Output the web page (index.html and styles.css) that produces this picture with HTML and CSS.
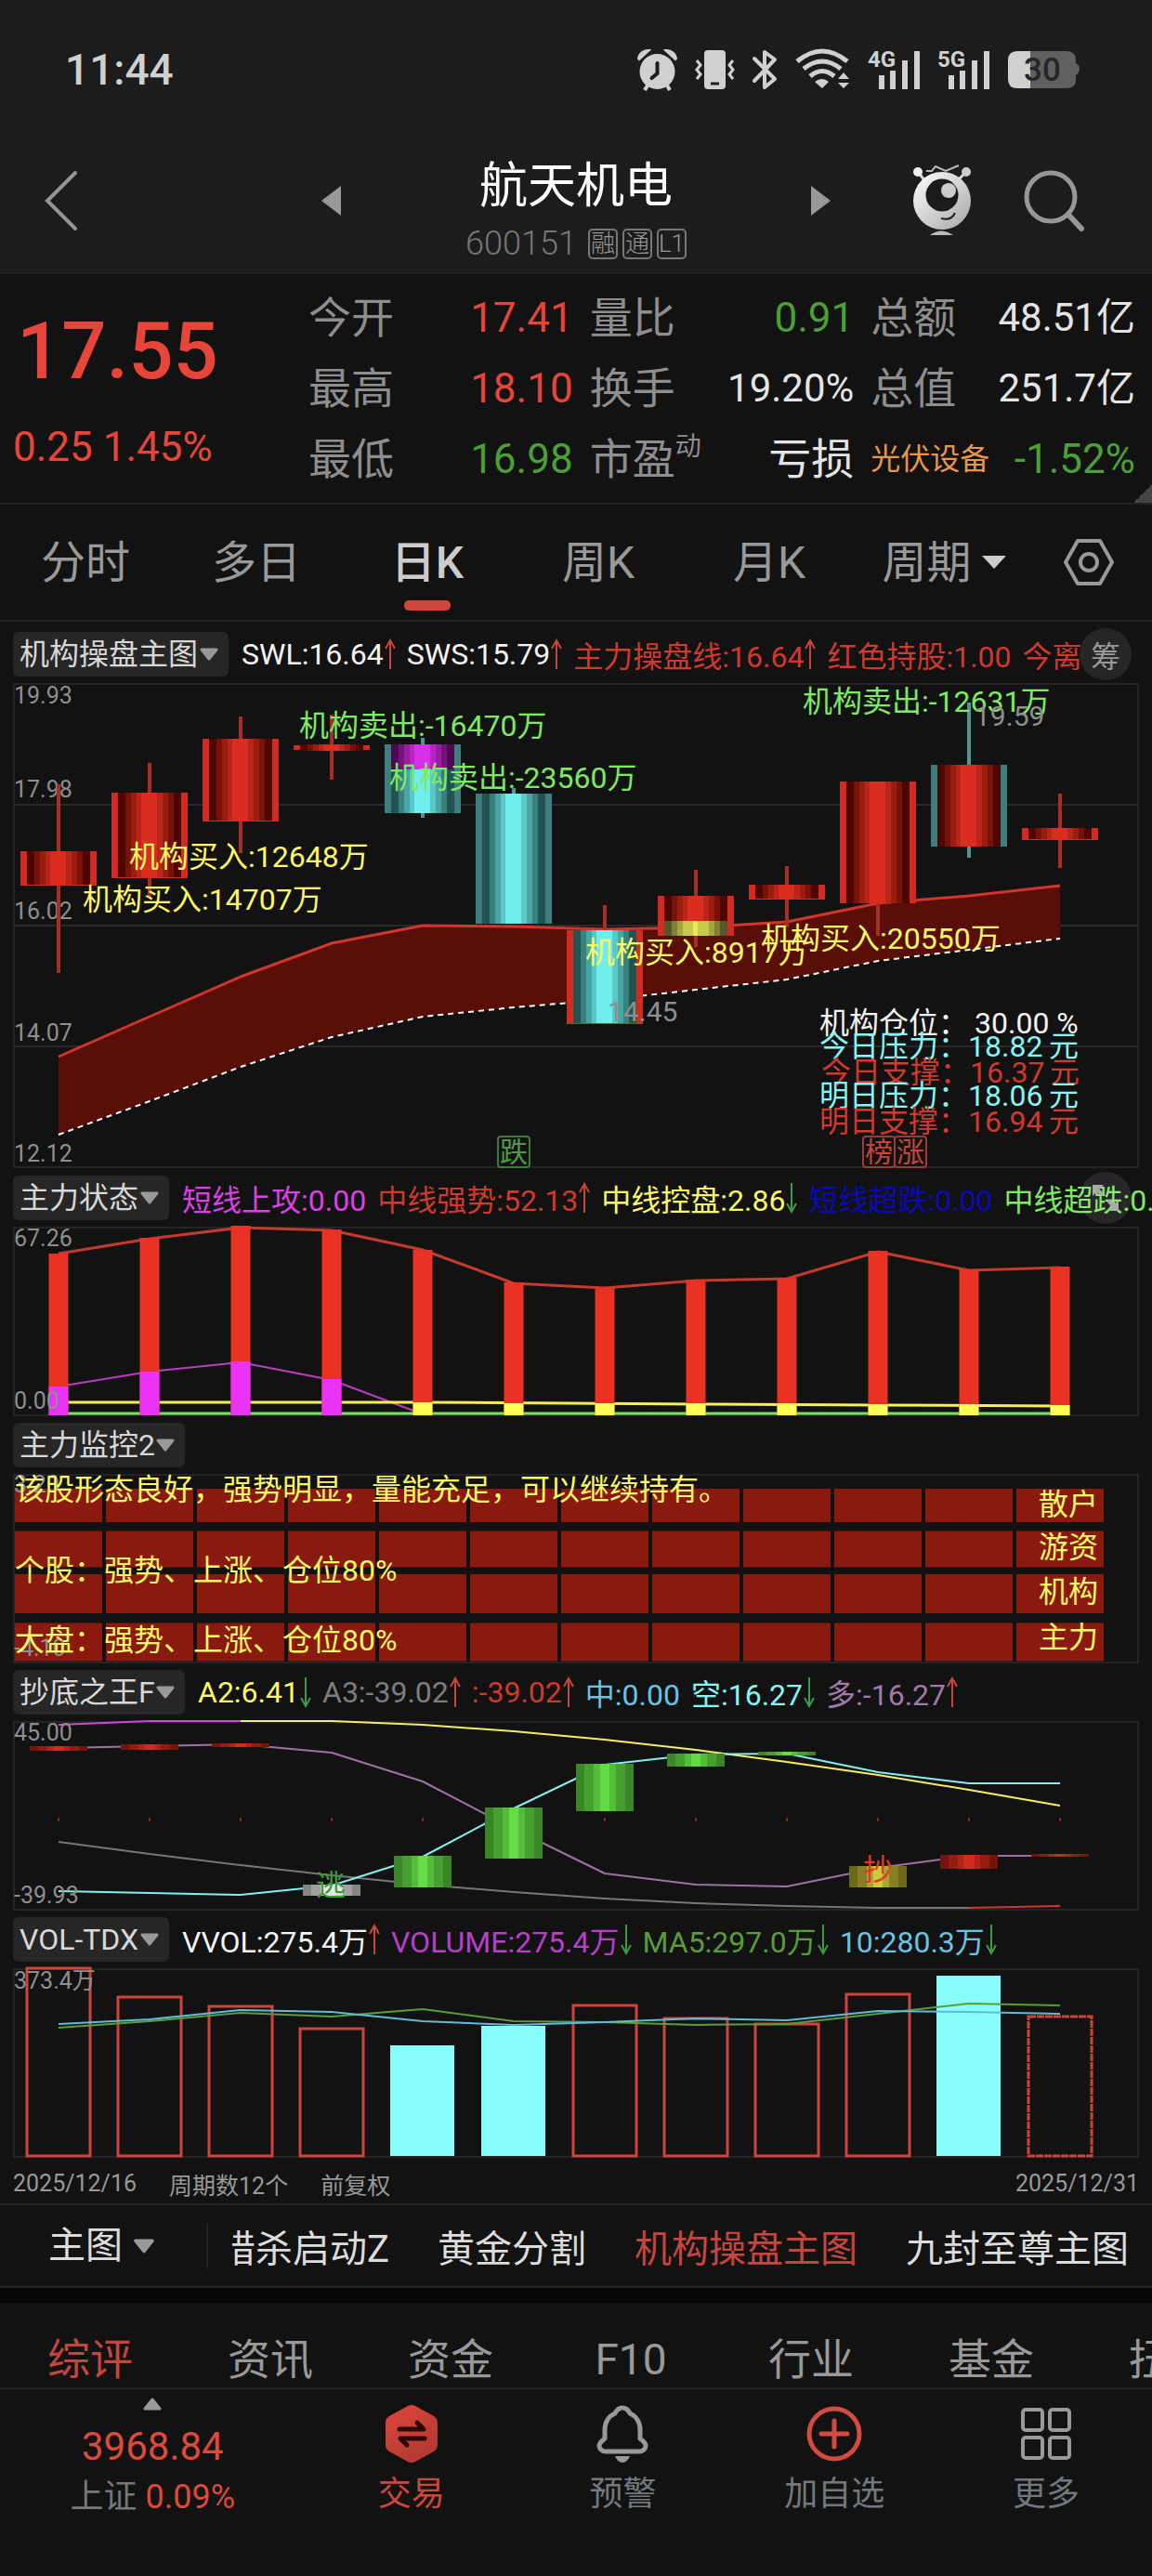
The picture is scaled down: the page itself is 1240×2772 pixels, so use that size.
FILE: index.html
```html
<!DOCTYPE html>
<html lang="zh-CN">
<head>
<meta charset="utf-8">
<meta name="viewport" content="width=device-width, initial-scale=1">
<title>航天机电 600151</title>
<link rel="stylesheet" href="styles.css">
</head>
<body>
<svg class="defs" width="0" height="0" aria-hidden="true">
  <defs>
    <symbol id="up" viewBox="0 0 12 34"><path d="M6 33V2M1 11L6 2l5 9" fill="none" stroke="#c8453a" stroke-width="2"/></symbol>
    <symbol id="down" viewBox="0 0 12 34"><path d="M6 1v31M1 23l5 9 5-9" fill="none" stroke="#3f9a46" stroke-width="2"/></symbol>
    <symbol id="tri" viewBox="0 0 22 14"><path d="M3 2h16l-8 10z" fill="currentColor" stroke="currentColor" stroke-width="3" stroke-linejoin="round"/></symbol>
    <linearGradient id="red">
      <stop offset=".12" stop-color="#4e0700"/><stop offset=".12" stop-color="#771209"/><stop offset=".21" stop-color="#771209"/><stop offset=".21" stop-color="#9c1c12"/><stop offset=".29" stop-color="#9c1c12"/><stop offset=".29" stop-color="#b9251a"/><stop offset=".37" stop-color="#b9251a"/><stop offset=".37" stop-color="#da2d20"/><stop offset=".62" stop-color="#da2d20"/><stop offset=".62" stop-color="#b9251a"/><stop offset=".7" stop-color="#b9251a"/><stop offset=".7" stop-color="#9c1c12"/><stop offset=".79" stop-color="#9c1c12"/><stop offset=".79" stop-color="#771209"/><stop offset=".88" stop-color="#771209"/><stop offset=".88" stop-color="#4e0700"/>
    </linearGradient>
    <linearGradient id="cyan">
      <stop offset=".12" stop-color="#225350"/><stop offset=".12" stop-color="#36807d"/><stop offset=".21" stop-color="#36807d"/><stop offset=".21" stop-color="#49a5a3"/><stop offset=".29" stop-color="#49a5a3"/><stop offset=".29" stop-color="#5cc8c6"/><stop offset=".37" stop-color="#5cc8c6"/><stop offset=".37" stop-color="#6eeeec"/><stop offset=".62" stop-color="#6eeeec"/><stop offset=".62" stop-color="#5cc8c6"/><stop offset=".7" stop-color="#5cc8c6"/><stop offset=".7" stop-color="#49a5a3"/><stop offset=".79" stop-color="#49a5a3"/><stop offset=".79" stop-color="#36807d"/><stop offset=".88" stop-color="#36807d"/><stop offset=".88" stop-color="#225350"/>
    </linearGradient>
    <linearGradient id="magenta">
      <stop offset=".12" stop-color="#4d0852"/><stop offset=".12" stop-color="#75127c"/><stop offset=".21" stop-color="#75127c"/><stop offset=".21" stop-color="#9a1ca2"/><stop offset=".29" stop-color="#9a1ca2"/><stop offset=".29" stop-color="#b925c4"/><stop offset=".37" stop-color="#b925c4"/><stop offset=".37" stop-color="#da2fe8"/><stop offset=".62" stop-color="#da2fe8"/><stop offset=".62" stop-color="#b925c4"/><stop offset=".7" stop-color="#b925c4"/><stop offset=".7" stop-color="#9a1ca2"/><stop offset=".79" stop-color="#9a1ca2"/><stop offset=".79" stop-color="#75127c"/><stop offset=".88" stop-color="#75127c"/><stop offset=".88" stop-color="#4d0852"/>
    </linearGradient>
    <linearGradient id="olive">
      <stop offset=".12" stop-color="#55562c"/><stop offset=".12" stop-color="#808135"/><stop offset=".21" stop-color="#808135"/><stop offset=".21" stop-color="#a5a540"/><stop offset=".3" stop-color="#a5a540"/><stop offset=".3" stop-color="#c9c94c"/><stop offset=".46" stop-color="#c9c94c"/><stop offset=".46" stop-color="#ece958"/><stop offset=".53" stop-color="#ece958"/><stop offset=".53" stop-color="#c9c94c"/><stop offset=".7" stop-color="#c9c94c"/><stop offset=".7" stop-color="#a5a540"/><stop offset=".79" stop-color="#a5a540"/><stop offset=".79" stop-color="#808135"/><stop offset=".88" stop-color="#808135"/><stop offset=".88" stop-color="#55562c"/>
    </linearGradient>
    <linearGradient id="green">
      <stop offset=".14" stop-color="#3a8526"/><stop offset=".14" stop-color="#46a02f"/><stop offset=".3" stop-color="#46a02f"/><stop offset=".3" stop-color="#53bd38"/><stop offset=".42" stop-color="#53bd38"/><stop offset=".42" stop-color="#64dc45"/><stop offset=".58" stop-color="#64dc45"/><stop offset=".58" stop-color="#53bd38"/><stop offset=".7" stop-color="#53bd38"/><stop offset=".7" stop-color="#46a02f"/><stop offset=".86" stop-color="#46a02f"/><stop offset=".86" stop-color="#3a8526"/>
    </linearGradient>
    <linearGradient id="crimson">
      <stop offset=".14" stop-color="#74150d"/><stop offset=".14" stop-color="#931b11"/><stop offset=".3" stop-color="#931b11"/><stop offset=".3" stop-color="#b02318"/><stop offset=".4" stop-color="#b02318"/><stop offset=".4" stop-color="#ce2b1e"/><stop offset=".6" stop-color="#ce2b1e"/><stop offset=".6" stop-color="#b02318"/><stop offset=".7" stop-color="#b02318"/><stop offset=".7" stop-color="#931b11"/><stop offset=".86" stop-color="#931b11"/><stop offset=".86" stop-color="#74150d"/>
    </linearGradient>
    <linearGradient id="silver">
      <stop offset=".14" stop-color="#858585"/><stop offset=".14" stop-color="#a0a0a0"/><stop offset=".3" stop-color="#a0a0a0"/><stop offset=".3" stop-color="#e6e6e6"/><stop offset=".7" stop-color="#e6e6e6"/><stop offset=".7" stop-color="#a0a0a0"/><stop offset=".86" stop-color="#a0a0a0"/><stop offset=".86" stop-color="#858585"/>
    </linearGradient>
    <linearGradient id="gold">
      <stop offset=".14" stop-color="#6d691c"/><stop offset=".14" stop-color="#858023"/><stop offset=".3" stop-color="#858023"/><stop offset=".3" stop-color="#aaa52e"/><stop offset=".42" stop-color="#aaa52e"/><stop offset=".42" stop-color="#cfc93a"/><stop offset=".58" stop-color="#cfc93a"/><stop offset=".58" stop-color="#aaa52e"/><stop offset=".7" stop-color="#aaa52e"/><stop offset=".7" stop-color="#858023"/><stop offset=".86" stop-color="#858023"/><stop offset=".86" stop-color="#6d691c"/>
    </linearGradient>
    <linearGradient id="face" x1="0" y1="0" x2="1" y2="1"><stop offset="0" stop-color="#fff"/><stop offset="1" stop-color="#a6a6a6"/></linearGradient>
    <linearGradient id="hex" x1="0" y1="0" x2=".6" y2="1"><stop offset="0" stop-color="#e2463b"/><stop offset="1" stop-color="#b03a32"/></linearGradient>
  </defs>
</svg>

<div class="top">
  <div class="status">
    <time>11:44</time>
    <div class="status-icons">
      <svg width="43" height="44" viewBox="0 0 43 44" fill="#d0d0d0"><circle cx="21.500" cy="24" r="19"/><path d="M1 10A11 11 0 0 1 13 1L2 11zM42 10A11 11 0 0 0 30 1l11 10z" stroke="#d0d0d0" stroke-width="2"/><path d="M12 37l-4 7M31 37l4 7" stroke="#d0d0d0" stroke-width="4"/><path d="M21.500 15v11l-6 5" fill="none" stroke="#1c1c1c" stroke-width="4" stroke-linecap="round"/></svg>
      <svg width="43" height="44" viewBox="0 0 43 44"><rect x="10" y="1" width="23" height="42" rx="4" fill="#d0d0d0"/><path d="M17 37h9" stroke="#1c1c1c" stroke-width="3"/><path d="M2 12l4 5-4 5 4 5-4 5M41 12l-4 5 4 5-4 5 4 5" fill="none" stroke="#d0d0d0" stroke-width="3"/></svg>
      <svg width="27" height="44" viewBox="0 0 27 44"><path d="M2 10l22 22-11 9V3l11 8L2 34" fill="none" stroke="#d0d0d0" stroke-width="4" stroke-linejoin="round" stroke-linecap="round"/></svg>
      <svg width="59" height="44" viewBox="0 0 59 44"><path d="M2 13Q29 -9 56 13M9 21Q29 5 49 21M16 29Q29 18 42 29" fill="none" stroke="#d0d0d0" stroke-width="5"/><path d="M21 35q8-6 15 0l-7 7zM46 32h12l-6-7zM46 36h12l-6 6z" fill="#d0d0d0"/></svg>
      <svg width="56" height="44" viewBox="0 0 56 44"><text x="0" y="19" class="net">4G</text><path d="M15 28v15M27 23v20M40 12v31M53 2v41" stroke="#d0d0d0" stroke-width="6"/></svg>
      <svg width="57" height="44" viewBox="0 0 57 44"><text x="0" y="19" class="net">5G</text><path d="M15 28v15M27 23v20M40 12v31M53 2v41" stroke="#d0d0d0" stroke-width="6"/></svg>
      <svg width="77" height="44" viewBox="0 0 77 44"><path d="M24 2h38q11 0 11 9v4q4 2 4 6t-4 7v5q0 9-11 9H24z" fill="#606060"/><path d="M24 2H10Q0 2 0 12v20q0 10 10 10h14z" fill="#d0d0d0"/><text x="17" y="34" class="battery">30</text></svg>
    </div>
  </div>

  <header class="header">
    <button class="icon-btn back" aria-label="返回"><svg width="36" height="64" viewBox="0 0 36 64"><path d="M33 2L3 32l30 30" fill="none" stroke="#949494" stroke-width="4" stroke-linecap="round"/></svg></button>
    <div class="stock-nav">
      <button class="icon-btn" aria-label="上一只"><svg width="21" height="32" viewBox="0 0 21 32"><path d="M21 0v32L0 16z" fill="#999"/></svg></button>
      <div class="stock">
        <h1>航天机电</h1>
        <div class="code"><span>600151</span><i>融</i><i>通</i><i>L1</i></div>
      </div>
      <button class="icon-btn" aria-label="下一只"><svg width="21" height="32" viewBox="0 0 21 32"><path d="M0 0v32l21-16z" fill="#999"/></svg></button>
    </div>
    <div class="tools">
      <button class="icon-btn" aria-label="助手"><svg width="62" height="78" viewBox="0 0 62 78"><path d="M5 8l8 10M57 8L49 16" stroke="#d8d8d8" stroke-width="3"/><circle cx="5" cy="8" r="5" fill="#eee"/><circle cx="57" cy="8" r="5" fill="#ccc"/><path d="M14 7h6l4-5 11 5L49 1" fill="none" stroke="#bbb" stroke-width="2"/><circle cx="31" cy="39" r="31" fill="url(#face)"/><circle cx="31" cy="33" r="17.500" fill="#1a1a1a"/><circle cx="38" cy="28" r="8" fill="#ccc"/><path d="M30 58q11 3 15-6" fill="none" stroke="#222" stroke-width="2"/><path d="M18 76q12-9 25 0z" fill="#bbb"/></svg></button>
      <button class="icon-btn" aria-label="搜索"><svg width="65" height="66" viewBox="0 0 65 66"><circle cx="29" cy="29" r="26" fill="none" stroke="#979797" stroke-width="5"/><path d="M48 48l14 15" stroke="#979797" stroke-width="6" stroke-linecap="round"/></svg></button>
    </div>
  </header>
</div>

<section class="quote">
  <div class="price">
    <strong>17.55</strong>
    <span>0.25 1.45%</span>
  </div>
  <dl class="facts">
    <div><dt>今开</dt><dd class="up">17.41</dd></div>
    <div><dt>量比</dt><dd class="dn">0.91</dd></div>
    <div><dt>总额</dt><dd class="sm">48.51亿</dd></div>
    <div><dt>最高</dt><dd class="up">18.10</dd></div>
    <div><dt>换手</dt><dd class="sm">19.20%</dd></div>
    <div><dt>总值</dt><dd class="sm">251.7亿</dd></div>
    <div><dt>最低</dt><dd class="dn">16.98</dd></div>
    <div><dt>市盈<sup>动</sup></dt><dd>亏损</dd></div>
    <div><dt class="sector">光伏设备</dt><dd class="dn">-1.52%</dd></div>
  </dl>
</section>

<nav class="periods">
  <button>分时</button>
  <button>多日</button>
  <button class="on">日K</button>
  <button>周K</button>
  <button>月K</button>
  <label class="period-pick"><select aria-label="周期"><option>周期</option></select><svg width="26" height="14" viewBox="0 0 26 14"><path d="M0 0h26L13 14z" fill="#ccc"/></svg></label>
  <button class="gear" aria-label="设置"><svg width="54" height="50" viewBox="0 0 54 50"><path d="M15 2h24l13 23-13 23H15L2 25z" fill="none" stroke="#999" stroke-width="4" stroke-linejoin="round"/><circle cx="27" cy="25" r="9" fill="none" stroke="#999" stroke-width="4"/></svg></button>
</nav>

<main class="charts">
  <section class="panel">
    <div class="legend">
      <label class="pick"><select aria-label="主图指标"><option>机构操盘主图</option></select><svg><use href="#tri"/></svg></label>
      <ul>
        <li class="c-white">SWL:16.64<svg><use href="#up"/></svg></li>
        <li class="c-white">SWS:15.79<svg><use href="#up"/></svg></li>
        <li class="c-red">主力操盘线:16.64<svg><use href="#up"/></svg></li>
        <li class="c-red">红色持股:1.00</li>
        <li class="c-red">今离</li>
      </ul>
      <button class="round">筹</button>
    </div>
    <svg class="plot" viewBox="0 0 1212 522">
      <path d="M0 131h1212M0 261h1212M0 391h1212" stroke="#292929" stroke-width="2"/>
      <rect x="1" y="1" width="1210" height="520" class="frame"/>
      <g class="axis"><text x="1" y="22">19.93</text><text x="1" y="123">17.98</text><text x="1" y="254">16.02</text><text x="1" y="385">14.07</text><text x="1" y="515">12.12</text></g>
      <path d="M49 402L147 359 245 316 343 280 441 261 539 262 637 265 735 263 833 257 931 237 1029 229 1127 218V275L1029 287 931 299 833 319 735 330 637 341 539 349 441 359 343 381 245 413 147 450 49 486z" fill="#5a0e08"/>
      <path d="M49 402L147 359 245 316 343 280 441 261 539 262 637 265 735 263 833 257 931 237 1029 229 1127 218" class="line" stroke="#d0362a" stroke-width="3"/>
      <path d="M49 486L147 450 245 413 343 381 441 359 539 349 637 341 735 330 833 319 931 299 1029 287 1127 275" class="line" stroke="#fff" stroke-width="2" stroke-dasharray="6 5"/>
      <g stroke="#a82d24" stroke-width="4">
        <path d="M49 109v203M147 86v144M245 36v147M343 34v70M637 239v40M735 201v83M833 197v66M931 106v166M1127 119v80"/>
        <path d="M441 59v86M539 113v20M1029 21v167" stroke="#4d9693"/>
      </g>
      <g fill="#d02c22">
        <rect x="8" y="181" width="82" height="37"/><rect x="106" y="118" width="82" height="92"/><rect x="204" y="60" width="82" height="89"/><rect x="302" y="67" width="82" height="5"/><rect x="596" y="266" width="82" height="101"/><rect x="694" y="229" width="82" height="43"/><rect x="792" y="217" width="82" height="16"/><rect x="890" y="106" width="82" height="131"/><rect x="1086" y="156" width="82" height="13"/>
      </g>
      <g fill="#3b807f"><rect x="400" y="66" width="82" height="74"/><rect x="498" y="119" width="82" height="140"/><rect x="988" y="88" width="82" height="88"/></g>
      <g fill="url(#red)">
        <rect x="15" y="181" width="68" height="36"/><rect x="113" y="118" width="68" height="91"/><rect x="211" y="60" width="68" height="88"/><rect x="309" y="66" width="68" height="7"/><rect x="701" y="229" width="68" height="43"/><rect x="799" y="217" width="68" height="15"/><rect x="897" y="106" width="68" height="131"/><rect x="995" y="88" width="68" height="88"/><rect x="1093" y="156" width="68" height="12"/>
      </g>
      <g fill="url(#cyan)"><rect x="407" y="66" width="68" height="74"/><rect x="505" y="119" width="68" height="140"/><rect x="603" y="266" width="68" height="100"/></g>
      <rect x="407" y="66" width="68" height="27" fill="url(#magenta)"/>
      <rect x="701" y="256" width="68" height="16" fill="url(#olive)"/>
      <g class="t c-lime"><text x="308" y="57">机构卖出:-16470万</text><text x="405" y="113">机构卖出:-23560万</text><text x="850" y="31">机构卖出:-12631万</text></g>
      <g class="t c-yellow"><text x="125" y="198">机构买入:12648万</text><text x="75" y="244">机构买入:14707万</text><text x="616" y="301">机构买入:8917万</text><text x="805" y="286">机构买入:20550万</text></g>
      <g class="peak"><text x="1035" y="46">19.59</text><text x="640" y="364">14.45</text></g>
      <g class="t">
        <g class="c-white"><text x="868" y="377">机构仓位：</text><text x="1035" y="377">30.00 %</text></g>
        <g class="c-cyan"><text x="868" y="402">今日压力：</text><text x="1028" y="402">18.82</text><text x="1115" y="402">元</text></g>
        <g class="c-red"><text x="870" y="430">今日支撑：</text><text x="1030" y="430">16.37</text><text x="1116" y="430">元</text></g>
        <g class="c-cyan"><text x="868" y="455">明日压力：</text><text x="1028" y="455">18.06</text><text x="1115" y="455">元</text></g>
        <g class="c-red"><text x="868" y="483">明日支撑：</text><text x="1028" y="483">16.94</text><text x="1115" y="483">元</text></g>
      </g>
      <g class="mark" stroke="#3f7a38"><rect x="522" y="488" width="34" height="33" rx="3"/><text x="524" y="515" fill="#4f9a46">跌</text></g>
      <g class="mark" stroke="#9c3a34"><rect x="915" y="488" width="34" height="33" rx="3"/><rect x="949" y="488" width="34" height="33" rx="3"/><text x="917" y="515" fill="#c4463d">榜</text><text x="951" y="515" fill="#c4463d">涨</text></g>
    </svg>
  </section>

  <section class="panel">
    <div class="legend">
      <label class="pick"><select aria-label="副图一指标"><option>主力状态</option></select><svg><use href="#tri"/></svg></label>
      <ul>
        <li class="c-magenta">短线上攻:0.00</li>
        <li class="c-red">中线强势:52.13<svg><use href="#up"/></svg></li>
        <li class="c-yellow">中线控盘:2.86<svg><use href="#down"/></svg></li>
        <li class="c-blue">短线超跌:0.00</li>
        <li class="c-lime">中线超跌:0.00</li>
      </ul>
      <button class="round ghost" aria-label="展开"><svg width="28" height="28" viewBox="0 0 28 28" fill="#aaa" stroke="#aaa" stroke-width="4"><path d="M0 0h12L0 12zM28 28H16l12-12z" stroke="none"/><path d="M3 3l8 8M25 25l-8-8"/></svg></button>
    </div>
    <svg class="plot" viewBox="0 0 1212 203">
      <rect x="1" y="1" width="1210" height="202" class="frame"/>
      <path d="M49 201H1127" stroke="#7ee06a" stroke-width="3"/>
      <path d="M49 29L147 13 245 1 343 4 441 25 539 61 637 66 735 58 833 56 931 27 1029 47 1127 44" class="line" stroke="#c43a2c" stroke-width="3"/>
      <path d="M49 172L147 156 245 146 343 165 431 198" class="line" stroke="#b83ec0" stroke-width="2"/>
      <path d="M49 189H441L735 191 931 192 1127 193" class="line" stroke="#f8f04e" stroke-width="3"/>
      <g stroke="#e93223" stroke-width="21"><path d="M49 203V29M147 203V12M245 203V-1M343 203V3M441 203V25M539 203V60M637 203V65M735 203V57M833 203V55M931 203V26M1029 203V46M1127 203V43"/></g>
      <path d="M49 203V172M147 203V156M245 203V145M343 203V164" stroke="#ea33f7" stroke-width="21"/>
      <path d="M441 203V189M539 203V190M637 203V190M735 203V190M833 203V190M931 203V191M1029 203V191M1127 203V192" stroke="#ffff54" stroke-width="21"/>
      <g class="axis"><text x="1" y="21">67.26</text><text x="1" y="196">0.00</text></g>
    </svg>
  </section>

  <section class="panel">
    <div class="legend">
      <label class="pick"><select aria-label="副图二指标"><option>主力监控2</option></select><svg><use href="#tri"/></svg></label>
    </div>
    <svg class="plot" viewBox="0 0 1212 203">
      <rect x="1" y="1" width="1210" height="202" class="frame"/>
      <g stroke="#8a1a10" stroke-dasharray="94 4"><path d="M2 34H1174" stroke-width="36"/><path d="M2 81H1174" stroke-width="39"/><path d="M2 129H1174" stroke-width="42"/><path d="M2 181H1174" stroke-width="41"/></g>
      <g class="axis"><text x="1" y="20">3.20</text><text x="1" y="196">-4.10</text></g>
      <g class="t c-yellow"><text x="2" y="28">该股形态良好，强势明显，量能充足，可以继续持有。</text><text x="2" y="115">个股：强势、上涨、仓位80%</text><text x="2" y="190">大盘：强势、上涨、仓位80%</text><text x="1104" y="44">散户</text><text x="1104" y="90">游资</text><text x="1104" y="138">机构</text><text x="1104" y="187">主力</text></g>
    </svg>
  </section>

  <section class="panel">
    <div class="legend">
      <label class="pick"><select aria-label="副图三指标"><option>抄底之王F</option></select><svg><use href="#tri"/></svg></label>
      <ul>
        <li class="c-yellow">A2:6.41<svg><use href="#down"/></svg></li>
        <li class="c-gray">A3:-39.02<svg><use href="#up"/></svg></li>
        <li class="c-red">:-39.02<svg><use href="#up"/></svg></li>
        <li class="c-sky">中:0.00</li>
        <li class="c-cyan">空:16.27<svg><use href="#down"/></svg></li>
        <li class="c-mauve">多:-16.27<svg><use href="#up"/></svg></li>
      </ul>
    </div>
    <svg class="plot" viewBox="0 0 1212 203">
      <rect x="1" y="1" width="1210" height="202" class="frame"/>
      <path d="M49 130L147 143 245 155 343 166 441 176 539 184 637 191 735 196 833 199 931 201H1029" class="line" stroke="#777" stroke-width="2"/>
      <path d="M1029 201L1127 199" class="line" stroke="#d0362a" stroke-width="2"/>
      <path d="M49 4L147 0H245" class="line" stroke="#d544e0" stroke-width="2"/>
      <path d="M245 0H343L441 4 539 11 637 20 735 31 833 44 931 58 1029 74 1127 91" class="line" stroke="#f5ee62" stroke-width="2"/>
      <path d="M49 29L147 27 245 25 343 34 441 65 539 116 637 164 735 176 833 178 931 158 1029 145H1127" class="line" stroke="#9a73a3" stroke-width="2"/>
      <path d="M49 183L147 185 245 187 343 177 441 146 539 94 637 47 735 36 833 35 931 55 1029 67H1127" class="line" stroke="#84f0ee" stroke-width="2"/>
      <path d="M48 106H1130" stroke="#a02a20" stroke-width="3" stroke-dasharray="2 96"/>
      <g fill="url(#crimson)"><rect x="18" y="27" width="62" height="5"/><rect x="116" y="25" width="62" height="6"/><rect x="214" y="24" width="62" height="4"/><rect x="998" y="144" width="62" height="15"/><rect x="1096" y="143" width="62" height="3"/></g>
      <g fill="url(#green)"><rect x="410" y="145" width="62" height="34"/><rect x="508" y="93" width="62" height="55"/><rect x="606" y="46" width="62" height="51"/><rect x="704" y="35" width="62" height="14"/><rect x="802" y="33" width="62" height="4"/></g>
      <rect x="312" y="176" width="62" height="12" fill="url(#silver)"/>
      <rect x="900" y="156" width="62" height="23" fill="url(#gold)"/>
      <g class="t"><text x="326" y="188" fill="#3f9a36">逃</text><text x="915" y="171" fill="#e0372a">抄</text></g>
      <g class="axis"><text x="1" y="21">45.00</text><text x="1" y="196">-39.93</text></g>
    </svg>
  </section>

  <section class="panel">
    <div class="legend">
      <label class="pick"><select aria-label="副图四指标"><option>VOL-TDX</option></select><svg><use href="#tri"/></svg></label>
      <ul>
        <li class="c-white">VVOL:275.4万<svg><use href="#up"/></svg></li>
        <li class="c-purple">VOLUME:275.4万<svg><use href="#down"/></svg></li>
        <li class="c-green">MA5:297.0万<svg><use href="#down"/></svg></li>
        <li class="c-sky">10:280.3万<svg><use href="#down"/></svg></li>
      </ul>
    </div>
    <svg class="plot" viewBox="0 0 1212 203">
      <rect x="1" y="1" width="1210" height="202" class="frame"/>
      <g fill="none" stroke="#cf4438" stroke-width="3"><rect x="15" y="0" width="68" height="202"/><rect x="113" y="31" width="68" height="171"/><rect x="211" y="41" width="68" height="161"/><rect x="309" y="65" width="68" height="137"/><rect x="603" y="40" width="68" height="162"/><rect x="701" y="54" width="68" height="148"/><rect x="799" y="60" width="68" height="142"/><rect x="897" y="28" width="68" height="174"/><rect x="1093" y="52" width="68" height="150" stroke-dasharray="8 1"/></g>
      <g fill="#87fefd"><rect x="406" y="83" width="69" height="119"/><rect x="504" y="62" width="69" height="140"/><rect x="994" y="8" width="69" height="194"/></g>
      <path d="M49 64L147 57 245 48 343 52 441 44 539 57 637 58 735 61 833 60 931 49 1029 38 1127 40" class="line" stroke="#5a9b3a" stroke-width="2"/>
      <path d="M49 60L147 55 245 45 343 47 441 57 539 61 637 58 735 54 833 56 931 46 1029 47 1127 49" class="line" stroke="#5fbcd8" stroke-width="2"/>
      <g class="axis"><text x="1" y="22">373.4万</text></g>
    </svg>
  </section>

  <div class="range"><span>2025/12/16</span><span>周期数12个</span><span>前复权</span><span>2025/12/31</span></div>
</main>

<nav class="indicators">
  <label class="main-pick"><select aria-label="主图"><option>主图</option></select><svg><use href="#tri"/></svg></label>
  <div class="scroller"><button>猎杀启动Z</button><button>黄金分割</button><button class="on">机构操盘主图</button><button>九封至尊主图</button></div>
</nav>

<nav class="topics">
  <a class="on" href="#summary">综评</a><a href="#news">资讯</a><a href="#funds">资金</a><a href="#f10">F10</a><a href="#industry">行业</a><a href="#etf">基金</a><a href="#turn">扭亏</a>
</nav>

<footer class="bottom">
  <button class="index">
    <svg width="22" height="14" viewBox="0 0 22 14"><path d="M3 12h16l-8-10z" fill="#999" stroke="#999" stroke-width="3" stroke-linejoin="round"/></svg>
    <b>3968.84</b>
    <span>上证 <em>0.09%</em></span>
  </button>
  <button class="trade"><svg width="56" height="62" viewBox="0 0 56 62"><path d="M24 1q4-2 8 0l20 11q4 3 4 7v24q0 4-4 7L32 61q-4 2-8 0L4 50q-4-3-4-7V19q0-4 4-7z" fill="url(#hex)"/><path d="M15 26h26l-7-7M42 36H16l7 7" fill="none" stroke="#2b0907" stroke-width="5" stroke-linecap="round" stroke-linejoin="round"/></svg>交易</button>
  <button><svg width="56" height="62" viewBox="0 0 56 62"><path d="M28 3c-4 0-6 2-8 6-7 3-11 10-11 18v9c-2 2-6 4-6 8 0 3 3 6 7 6h36c4 0 7-3 7-6 0-4-4-6-6-8v-9c0-8-4-15-11-18-2-4-4-6-8-6z" fill="none" stroke="#999" stroke-width="5"/><path d="M20 55h16q-3 7-8 7t-8-7z" fill="#999"/></svg>预警</button>
  <button><svg width="60" height="62" viewBox="0 0 60 62"><circle cx="30" cy="31" r="27" fill="none" stroke="#d24a40" stroke-width="5"/><path d="M30 17v28M16 31h28" stroke="#d24a40" stroke-width="5" stroke-linecap="round"/></svg>加自选</button>
  <button><svg width="56" height="62" viewBox="0 0 56 62" fill="none" stroke="#999" stroke-width="4"><rect x="3" y="5" width="21" height="22" rx="3"/><rect x="32" y="5" width="21" height="22" rx="3"/><rect x="3" y="35" width="21" height="22" rx="3"/><rect x="32" y="35" width="21" height="22" rx="3"/></svg>更多</button>
</footer>
</body>
</html>
```
FILE: styles.css
```css
* { box-sizing: border-box; }

body {
  margin: 0;
  min-height: 100vh;
  background: #121212;
  color: #999;
  font-family: Roboto, "Noto Sans CJK SC", sans-serif;
  overflow-x: hidden;
}

button, select {
  appearance: none;
  margin: 0;
  padding: 0;
  border: 0;
  background: none;
  color: inherit;
  font: inherit;
}

svg { display: block; flex: none; overflow: visible; }
.defs { position: absolute; }
h1, dl, dd, ul { margin: 0; padding: 0; }
ul { list-style: none; }

/* Status bar and title */
.top { background: #1c1c1c; height: 295px; }

.status {
  display: flex;
  align-items: center;
  justify-content: space-between;
  height: 125px;
  padding: 24px 78px 0 70px;
}
.status time { color: #d0d0d0; font-size: 46px; font-weight: 500; }
.status-icons { display: flex; gap: 19px; }
.net { fill: #d0d0d0; font-size: 24px; font-weight: 700; }
.battery { fill: #262626; font-size: 35px; font-weight: 500; }

.header {
  display: grid;
  grid-template-columns: 1fr 548px 1fr;
  align-items: center;
  height: 170px;
  padding-top: 12px;
}
.back { justify-self: start; padding-left: 48px; }
.stock-nav { display: flex; align-items: center; justify-content: space-between; }
.stock { display: flex; flex-direction: column; align-items: center; gap: 12px; padding-top: 16px; }
.stock h1 { color: #fff; font-size: 52px; font-weight: 400; line-height: 64px; }
.code { display: flex; align-items: center; gap: 5px; height: 34px; font-size: 36px; font-weight: 300; color: #777; }
.code span { margin-right: 7px; }
.code i {
  width: 32px;
  height: 33px;
  border: 2px solid #777;
  border-radius: 5px;
  color: #999;
  font-size: 26px;
  font-style: normal;
  line-height: 29px;
  text-align: center;
}
.tools { display: flex; align-items: center; justify-content: flex-end; gap: 57px; padding-right: 73px; }

/* Quote */
.quote {
  display: flex;
  height: 248px;
  padding: 9px 18px 0 14px;
  border-bottom: 2px solid #222;
  background: linear-gradient(to bottom right, transparent 50%, #444 50%) right bottom / 20px 20px no-repeat;
}
.price { flex: 0 0 318px; color: #e8453a; }
.price strong { display: block; margin: 20px 0 0 4px; font-size: 85px; font-weight: 500; line-height: 108px; }
.price span { display: block; font-size: 44px; line-height: 98px; }
.facts {
  flex: 1;
  display: grid;
  grid-template-columns: repeat(3, 1fr);
  grid-auto-rows: 76px;
  column-gap: 18px;
  color: #e4e4e4;
  font-size: 46px;
  line-height: 76px;
}
.facts div { display: flex; justify-content: space-between; white-space: nowrap; }
.facts dt { color: #8e8e8e; }
.facts sup { position: relative; top: -20px; font-size: 28px; line-height: 0; vertical-align: baseline; }
.facts .sector { color: #e8964b; font-size: 32px; }
.facts .sm { font-size: 42px; }
.facts .up, .facts .dn { font-size: 44px; }
.facts .up { color: #e8453a; }
.facts .dn { color: #4c9f35; }

/* Period tabs */
.periods {
  display: grid;
  grid-template-columns: repeat(6, 184fr) 136fr;
  align-items: stretch;
  height: 126px;
  border-bottom: 2px solid #222;
  font-size: 48px;
}
.periods button { padding-bottom: 8px; }
.periods .on { position: relative; color: #ccc; font-weight: 500; }
.periods .on::after {
  content: "";
  position: absolute;
  bottom: 10px;
  left: 50%;
  width: 50px;
  height: 11px;
  margin-left: -25px;
  border-radius: 5px;
  background: #d4453b;
}
.period-pick { display: flex; align-items: center; justify-content: center; gap: 10px; padding-left: 8px; }
.periods .gear { display: flex; align-items: center; justify-content: center; padding: 0; }

/* Chart panels */
.charts { padding-top: 10px; }
.panel { padding-bottom: 7px; }
.legend {
  position: relative;
  display: flex;
  align-items: center;
  gap: 14px;
  height: 49px;
  margin-bottom: 7px;
  padding-left: 14px;
  font-size: 32px;
  white-space: nowrap;
}
.pick {
  display: flex;
  align-items: center;
  flex: none;
  height: 48px;
  padding: 0 10px 0 7px;
  border-radius: 6px;
  background: #262626;
  color: #d8d8d8;
}
.pick svg, .main-pick svg { width: 22px; height: 14px; color: #999; }
.legend ul { display: flex; gap: 12px; }
.legend li { display: flex; align-items: center; flex: none; }
.legend li svg { width: 12px; height: 34px; margin-left: 1px; }
.round {
  position: absolute;
  top: 50%;
  right: 22px;
  display: flex;
  align-items: center;
  justify-content: center;
  width: 56px;
  height: 56px;
  margin-top: -28px;
  border-radius: 50%;
  background: #262626;
  color: #999;
}
.ghost { background: rgba(255, 255, 255, .09); }

.plot { width: calc(100% - 28px); height: auto; margin: 0 14px; }
.frame { fill: none; stroke: #242424; stroke-width: 2; }
.line { fill: none; stroke-linejoin: round; }
.axis, .peak { fill: #8f8f8f; }
.axis { font-size: 25px; }
.peak { font-size: 30px; }
.t { font-size: 32px; }
.mark rect { fill: none; stroke-width: 2; }
.mark text { stroke: none; font-size: 30px; }

.c-white { color: #f4f4f4; fill: #f4f4f4; }
.c-red { color: #d0392c; fill: #d0392c; }
.c-yellow { color: #fdf866; fill: #fdf866; }
.c-lime { color: #7eea63; fill: #7eea63; }
.c-cyan { color: #86f5f4; fill: #86f5f4; }
.c-magenta { color: #dd40e6; }
.c-purple { color: #b83fc8; }
.c-blue { color: #0a0ab8; }
.c-gray { color: #7d7d7d; }
.c-sky { color: #68c4e2; }
.c-mauve { color: #a07aa8; }
.c-green { color: #5a9b3a; }

.range {
  display: flex;
  align-items: center;
  height: 43px;
  padding: 0 14px;
  font-size: 25px;
}
.range span + span { margin-left: 35px; }
.range span:last-child { margin-left: auto; }

/* Indicator strip */
.indicators {
  display: flex;
  align-items: center;
  height: 91px;
  border-top: 2px solid #262626;
  border-bottom: 2px solid #262626;
  color: #dcdcdc;
  font-size: 40px;
}
.main-pick {
  display: flex;
  align-items: center;
  flex: 0 0 224px;
  gap: 10px;
  height: 48px;
  padding-left: 52px;
  border-right: 2px solid #222;
}
.main-pick svg { width: 26px; height: 16px; }
.scroller { display: flex; gap: 52px; flex: 1; margin-left: 25px; overflow: hidden; white-space: nowrap; }
.scroller button:first-child { margin-left: -14px; }
.scroller .on { color: #c4463d; }

/* Topic tabs */
.topics {
  display: flex;
  height: 110px;
  padding-top: 30px;
  border-top: 16px solid #070707;
  border-bottom: 3px solid #1d1d1d;
  overflow: hidden;
  font-size: 46px;
  line-height: 62px;
}
.topics a { flex: 0 0 194px; color: #999; text-align: center; text-decoration: none; }
.topics .on { color: #c4463d; }

/* Bottom bar */
.bottom {
  display: grid;
  grid-template-columns: 329fr repeat(4, 228fr);
  height: 200px;
  color: #72787c;
  font-size: 36px;
}
.bottom button {
  display: flex;
  flex-direction: column;
  align-items: center;
  gap: 2px;
  padding-top: 16px;
  line-height: 64px;
}
.bottom .trade { color: #cf463c; }
.bottom .index { gap: 0; padding-top: 8px; line-height: 54px; }
.index b { margin-top: 12px; color: #dd4a3c; font-size: 42px; font-weight: 400; }
.index em { color: #dd4a3c; font-style: normal; }
```
